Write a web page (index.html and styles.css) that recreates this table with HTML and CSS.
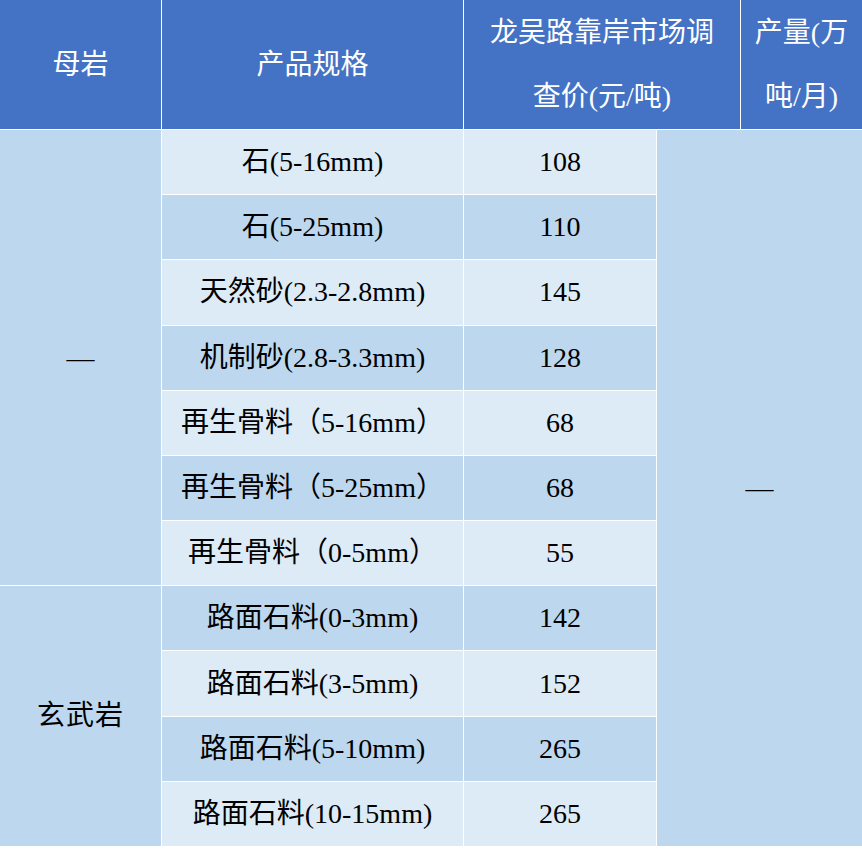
FILE: index.html
```html
<!DOCTYPE html>
<html lang="zh-CN">
<head>
<meta charset="utf-8">
<title>价格表</title>
<link rel="stylesheet" href="styles.css">
</head>
<body>
<div class="table">
  <div class="th">母岩</div>
  <div class="th">产品规格</div>
  <div class="th th-price">龙吴路靠岸市场调<br>查价(元/吨)</div>
  <div class="th th-output">产量(万<br>吨/月)</div>

  <div class="td group group-a">—</div>
  <div class="td output">—</div>

  <div class="td spec light">石(5-16mm)</div>
  <div class="td price light">108</div>
  <div class="td spec dark">石(5-25mm)</div>
  <div class="td price dark">110</div>
  <div class="td spec light">天然砂(2.3-2.8mm)</div>
  <div class="td price light">145</div>
  <div class="td spec dark">机制砂(2.8-3.3mm)</div>
  <div class="td price dark">128</div>
  <div class="td spec light">再生骨料（5-16mm）</div>
  <div class="td price light">68</div>
  <div class="td spec dark">再生骨料（5-25mm）</div>
  <div class="td price dark">68</div>
  <div class="td spec light">再生骨料（0-5mm）</div>
  <div class="td price light">55</div>

  <div class="td group group-b">玄武岩</div>

  <div class="td spec dark">路面石料(0-3mm)</div>
  <div class="td price dark">142</div>
  <div class="td spec light">路面石料(3-5mm)</div>
  <div class="td price light">152</div>
  <div class="td spec dark">路面石料(5-10mm)</div>
  <div class="td price dark">265</div>
  <div class="td spec light">路面石料(10-15mm)</div>
  <div class="td price light">265</div>
</div>
</body>
</html>
```

FILE: styles.css
```css
html, body {
  margin: 0;
  padding: 0;
  background: #ffffff;
}

.table {
  display: grid;
  grid-template-columns: 161px 301px 192px 83px 121px;
  grid-template-rows: 129px repeat(11, 1fr);
  gap: 1px;
  width: 862px;
  height: 846px;
  background: #ffffff;
  font-family: "Liberation Serif", "Noto Sans CJK SC", serif;
}

.th {
  display: flex;
  align-items: center;
  justify-content: center;
  text-align: center;
  background: #4472c4;
  color: #ffffff;
  font-size: 28px;
  line-height: 64px;
}

.th-price {
  grid-column: 3 / span 2;
}

.th-output {
  grid-column: 5;
}

.td {
  display: flex;
  align-items: center;
  justify-content: center;
  text-align: center;
  color: #000000;
  font-size: 28px;
  line-height: 1;
}

.spec {
  grid-column: 2;
}

.price {
  grid-column: 3;
}

.light {
  background: #ddebf7;
}

.dark {
  background: #bdd7ee;
}

.group {
  grid-column: 1;
  background: #bdd7ee;
}

.group-a {
  grid-row: 2 / span 7;
}

.group-b {
  grid-row: 9 / span 4;
  letter-spacing: 1px;
}

.output {
  grid-column: 4 / span 2;
  grid-row: 2 / span 11;
  background: #bdd7ee;
}
```
